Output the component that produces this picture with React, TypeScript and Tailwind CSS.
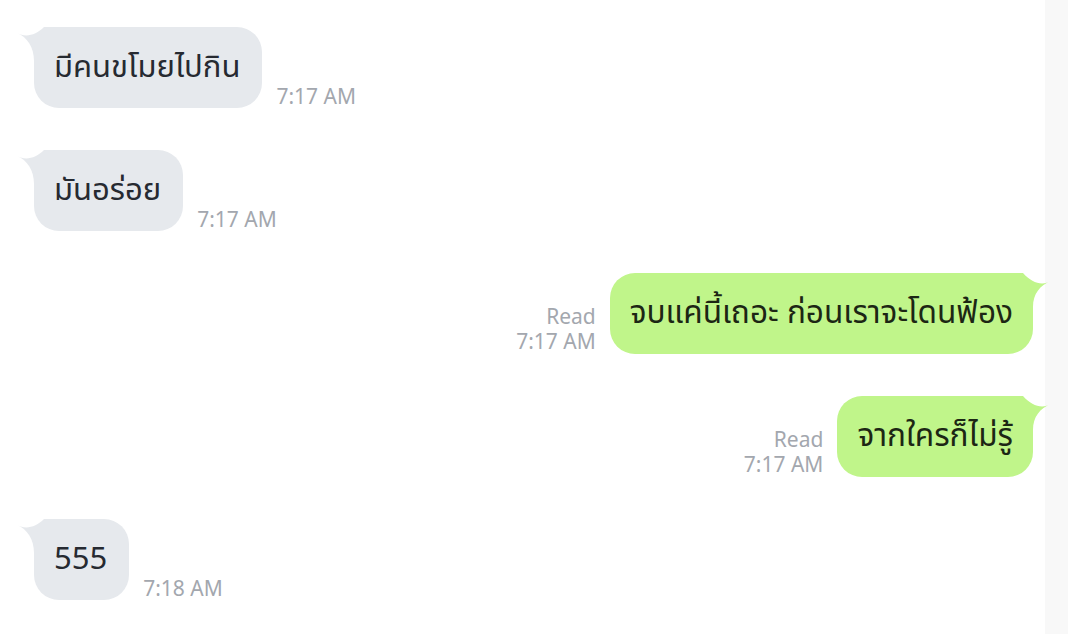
const MESSAGES = [
  { side: "left", text: "มีคนขโมยไปกิน", time: "7:17 AM" },
  { side: "left", text: "มันอร่อย", time: "7:17 AM" },
  { side: "right", text: "จบแค่นี้เถอะ ก่อนเราจะโดนฟ้อง", time: "7:17 AM" },
  { side: "right", text: "จากใครก็ไม่รู้", time: "7:17 AM" },
  { side: "left", text: "555", time: "7:18 AM" },
];

const FONT = "font-['Noto_Sans_Thai','Noto_Sans','DejaVu_Sans',sans-serif]";

export default function App() {
  return (
    <div
      className={`h-[634px] w-full overflow-hidden bg-[linear-gradient(to_right,#ffffff_1045px,#f8f8f8_1045px)] ${FONT}`}
    >
      <div className="flex flex-col gap-[42px] pt-[27px] pl-[34px] pr-[35px]">
        {MESSAGES.map((m, i) =>
          m.side === "left" ? (
            <div key={i} className="flex items-end">
              <div className="relative">
                <LeftTail />
                <div className="relative rounded-[25px] bg-[#e6e9ed] pl-[20px] pr-[22px] py-[20px] text-[31px] leading-[41px] text-[#262a31]">
                  {m.text}
                </div>
              </div>
              <div className="ml-[14px] mb-[-2px] text-[21px] leading-[25px] text-[#a3a7ae]">{m.time}</div>
            </div>
          ) : (
            <div key={i} className="flex items-end justify-end">
              <div className="mr-[14px] mb-[-1px] flex flex-col items-end text-[21px] leading-[25px] text-[#a3a7ae]">
                <span className="block h-[25px]">Read</span>
                <span className="block h-[25px]">{m.time}</span>
              </div>
              <div className="relative">
                <RightTail />
                <div className="relative rounded-[25px] bg-[#c0f58a] px-[20px] py-[20px] text-[31.6px] leading-[41px] text-[#1c2614]">
                  {m.text}
                </div>
              </div>
            </div>
          )
        )}
      </div>
    </div>
  );
}

function LeftTail() {
  return (
    <svg className="absolute left-[-17px] top-0 h-[34px] w-[43px]" viewBox="0 0 43 34" aria-hidden>
      <path d="M0 6 C9 11 19 8 27 0 L43 0 L43 34 L17 34 C17 20 10 10 0 6 Z" fill="#e6e9ed" />
    </svg>
  );
}

function RightTail() {
  return (
    <svg className="absolute right-[-18px] top-0 h-[34px] w-[44px]" viewBox="0 0 44 34" aria-hidden>
      <path d="M44 8 C35 13 25 10 16 0 L0 0 L0 34 L26 34 C26 21 33 12 44 8 Z" fill="#c0f58a" />
    </svg>
  );
}
